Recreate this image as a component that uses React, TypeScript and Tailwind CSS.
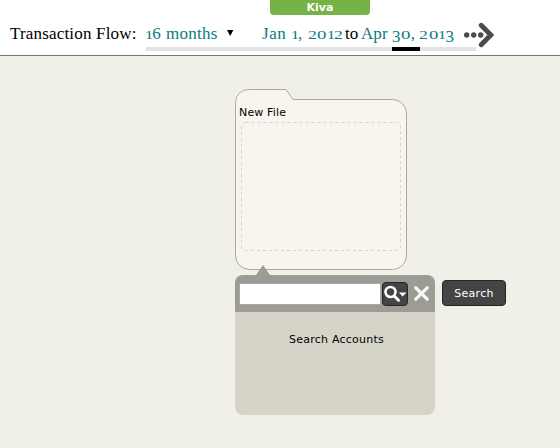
import React from "react";

const figures: Record<string, string> = {
  "0": "inline-block w-[9.8px] origin-left scale-x-[1.45] text-[13px] leading-none tracking-normal",
  "1": "inline-block w-[7.2px] origin-left scale-x-[1.25] text-[13px] leading-none tracking-normal",
  "2": "inline-block w-[9.2px] origin-left scale-x-[1.36] text-[13px] leading-none tracking-normal",
  "3": "relative top-[3px] text-[17px] tracking-[0.5px]",
  "6": "text-[17px] tracking-[0.8px]",
};

// Sets figures in old style: 0, 1 and 2 at x-height, 3 below the baseline.
function OldStyle({ children }: { children: string }) {
  return (
    <>
      {children.split("").map((c, i) =>
        figures[c] ? (
          <span key={i} className={figures[c]}>{c}</span>
        ) : (
          c
        ),
      )}
    </>
  );
}

function Header() {
  return (
    <header className="flex h-14 flex-col border-b border-[#777777] bg-white">
      <div className="ml-[270px] flex h-[15px] w-[100px] shrink-0 items-center justify-center rounded-b-[4px] bg-[#76b246] font-['DejaVu_Sans'] text-[11px] leading-[15px] font-bold text-white">
        Kiva
      </div>
      <div className="flex h-8 shrink-0 items-center pl-[10px] font-['Liberation_Serif',serif] text-[17px] leading-8 whitespace-pre text-[#0b7c80]">
        <span className="h-8 w-[135px] pt-[3px] tracking-[0.18px] text-black">Transaction Flow:</span>
        <span className="h-8 w-[82px] pt-[3px] tracking-[0.25px]"><OldStyle>16 months</OldStyle></span>
        <svg className="mt-[3px] mr-[28px]" width="7" height="6" viewBox="0 0 7 6"><path d="M0 0h6.4L3.2 6z" fill="#000" /></svg>
        <span className="h-8 w-[83px] pt-[3px] tracking-[0.5px]"><OldStyle>Jan 1, 2012</OldStyle></span>
        <span className="h-8 w-4 pt-[3px] text-black">to</span>
        <span className="h-8 w-[103px] pt-[3px] tracking-[0.05px]"><OldStyle>Apr 30, 2013</OldStyle></span>
        <svg className="mt-[8px]" width="30" height="26" viewBox="0 0 30 26" fill="#4c4c4c">
          <circle cx="2.7" cy="13" r="2.7" />
          <circle cx="9.7" cy="13" r="2.7" />
          <circle cx="16.7" cy="13" r="2.7" />
          <path d="M17.2 3.2L26.8 13l-9.6 9.8" fill="none" stroke="#4c4c4c" strokeWidth="4.8" strokeLinecap="round" />
        </svg>
      </div>
      <div className="ml-[146px] h-1 w-[330px] shrink-0 bg-[#e3e3e3]">
        <div className="ml-[246px] h-1 w-7 bg-black" />
      </div>
    </header>
  );
}

function Folder() {
  return (
    <div className="relative h-[182px] w-[173px]">
      <svg className="absolute inset-0" width="173" height="182" viewBox="0 0 173 182" fill="none">
        <path
          d="M.5 13.5A13 13 0 0 1 13.5 .5H51L58 10.5H157.5A14 14 0 0 1 171.5 24.5V166.5A14 14 0 0 1 157.5 180.5H14.5A14 14 0 0 1 .5 166.5Z"
          fill="#f8f5ee"
          stroke="#a9a9a2"
        />
        <rect x="6.5" y="33.5" width="159" height="128" rx="4" stroke="#d4d3cf" strokeDasharray="3 3" />
      </svg>
      <div className="relative pt-[16px] pl-1 text-[11px] leading-4 tracking-[0.15px]">New File</div>
    </div>
  );
}

function SearchPanel() {
  return (
    <div className="relative flex items-start gap-[7px]">
      <svg className="absolute top-[-10px] left-[21px]" width="14" height="10" viewBox="0 0 14 10"><path d="M7 0l7 10H0z" fill="#9c9b94" /></svg>
      <section className="h-[140px] w-[200px] overflow-hidden rounded-[8px] bg-[#d6d4c8]">
        <div className="flex h-[37px] items-center bg-[#9c9b94] pl-1">
          <input className="h-[22px] w-[142px] border border-[#aaa9a4] bg-white outline-none" />
          <button className="ml-px flex h-6 w-[26px] items-center justify-center rounded-[4px] border border-[#252525] bg-[#444444]">
            <svg width="24" height="22" viewBox="0 0 24 22">
              <circle cx="7.5" cy="9" r="5" fill="none" stroke="#fff" strokeWidth="2.6" />
              <path d="M11.2 13L15.5 17.3" stroke="#fff" strokeWidth="3" strokeLinecap="round" />
              <path d="M16 9.5h7.4L19.7 13.5z" fill="#fff" />
            </svg>
          </button>
          <svg className="ml-[6px]" width="15" height="15" viewBox="0 0 15 15" stroke="#f8f8f8" strokeWidth="3.2" strokeLinecap="round"><path d="M1.8 1.8l11.4 11.4M13.2 1.8L1.8 13.2" /></svg>
        </div>
        <div className="mt-[20px] pl-[3px] text-center text-[11px] leading-4 tracking-[0.25px]">Search Accounts</div>
      </section>
      <button className="mt-[5px] h-[26px] w-16 rounded-[4px] border border-[#252525] bg-[#444444] pt-px text-[11px] leading-[23px] tracking-[0.3px] text-white">
        Search
      </button>
    </div>
  );
}

export default function App() {
  return (
    <div className="h-[448px] w-[560px] overflow-hidden bg-[#f0f0e8] font-['DejaVu_Sans',sans-serif] text-black">
      <Header />
      <main className="flex flex-col gap-1 pt-[33px] pl-[235px]">
        <Folder />
        <SearchPanel />
      </main>
    </div>
  );
}
